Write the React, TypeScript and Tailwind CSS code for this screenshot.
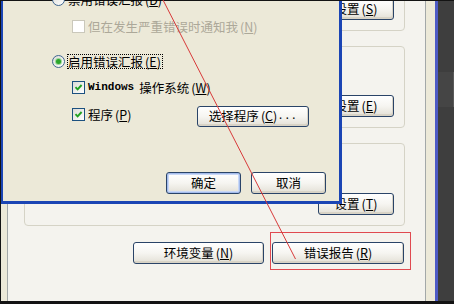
import React from "react";

function Checkbox({ checked = false, disabled = false }: { checked?: boolean; disabled?: boolean }) {
  return (
    <span
      className={
        disabled
          ? "flex h-[13px] w-[13px] shrink-0 items-center justify-center border border-[#CAC8BB] bg-white"
          : "flex h-[13px] w-[13px] shrink-0 items-center justify-center border border-[#1C5180] bg-linear-to-br from-[#DCDCD7] to-white"
      }
    >
      {checked && (
        <svg width="9" height="9" viewBox="0 0 9 9">
          <path d="M1.5 4.2 L3.6 6.4 L7.6 2" fill="none" stroke="#21A121" strokeWidth="1.9" />
        </svg>
      )}
    </span>
  );
}

function Radio({ checked = false }: { checked?: boolean }) {
  return (
    <span className="flex h-[13px] w-[13px] shrink-0 items-center justify-center rounded-full border border-[#3F6690] bg-linear-to-br from-[#DCDCD7] to-white">
      {checked && <span className="h-[5px] w-[5px] rounded-full bg-[#2CA52C] shadow-[0_0_0_1px_#9AD89A]" />}
    </span>
  );
}

function Key({ k }: { k: string }) {
  return (
    <span className="ml-[2px]">
      (<u>{k}</u>)
    </span>
  );
}

function XPButton({
  children,
  className = "",
  isDefault = false,
}: {
  children: React.ReactNode;
  className?: string;
  isDefault?: boolean;
}) {
  return (
    <div
      className={
        "flex shrink-0 items-center justify-center rounded-[3px] border border-[#2A4468] bg-linear-to-b from-white via-[#F6F5F1] to-[#E3E0D6] text-[12.5px] leading-none text-black " +
        (isDefault
          ? "shadow-[inset_0_0_0_1px_#A4BCEC,inset_0_0_0_2px_#C9D8F6] "
          : "shadow-[inset_-1px_-2px_0_#D8D3C6] ") +
        className
      }
    >
      {children}
    </div>
  );
}

export default function App() {
  return (
    <div className="relative h-[304px] w-[454px] overflow-hidden bg-[#131313] font-['Noto_Sans_CJK_SC',sans-serif] text-[12.5px] leading-[13px] text-black">
      {/* desktop row: background window + dark area */}
      <div className="flex h-[301px] pl-[1px] pt-[1px]">
        <div className="flex h-full w-[437px] border-r-[3px] border-[#4E5BC4] bg-[#ECE9D8] pl-[6px] pr-[9px]">
          <div className="flex flex-1 flex-col overflow-hidden border-x border-[#A3A8A8] bg-[#F4F3EE] pl-[16px]">
            <div className="mt-[-29px] flex h-[59px] w-[381px] shrink-0 items-end justify-end rounded-[4px] border border-[#D5D3C6] pb-[10px] pr-[10px]">
              <XPButton className="h-[22px] w-[76px]">
                设置<Key k="S" />
              </XPButton>
            </div>
            <div className="mt-[15px] flex h-[82px] w-[381px] shrink-0 items-end justify-end rounded-[4px] border border-[#D5D3C6] pb-[10px] pr-[10px]">
              <XPButton className="h-[22px] w-[76px]">
                设置<Key k="E" />
              </XPButton>
            </div>
            <div className="mt-[15px] flex h-[83px] w-[381px] shrink-0 items-end justify-end rounded-[4px] border border-[#D5D3C6] pb-[10px] pr-[10px]">
              <XPButton className="h-[22px] w-[76px]">
                设置<Key k="T" />
              </XPButton>
            </div>
            <div className="mt-[16px] flex w-[381px] shrink-0 justify-end gap-[8px] pr-[1px]">
              <XPButton className="h-[22px] w-[131px]">
                环境变量<Key k="N" />
              </XPButton>
              <XPButton className="h-[22px] w-[132px]">
                错误报告<Key k="R" />
              </XPButton>
            </div>
          </div>
        </div>
        <div className="flex flex-1 flex-col bg-[#3E3E3E]">
          <div className="mt-[71px] h-[35px] border-r border-[#5A5A5A] bg-[#454545]" />
        </div>
      </div>

      {/* foreground dialog */}
      <div className="absolute left-[1px] top-[1px] flex h-[203px] w-[341px] flex-col border-b-[3px] border-l-[2px] border-r-[3px] border-[#1B45B4] bg-[#ECE9D8]">
        <div className="mt-[-8px] flex h-[13px] shrink-0 items-center gap-[3px] pl-[49px]">
          <Radio />
          <span>
            禁用错误汇报<Key k="D" />
          </span>
        </div>
        <div className="mt-[14px] flex h-[13px] shrink-0 items-center gap-[3px] pl-[69px]">
          <Checkbox disabled />
          <span className="text-[#ACA899]">
            但在发生严重错误时通知我<Key k="N" />
          </span>
        </div>
        <div className="mt-[22px] flex h-[13px] shrink-0 items-center gap-[2px] pl-[49px]">
          <Radio checked />
          <span className="flex h-[15px] items-center border border-dotted border-black pr-[1px]">
            启用错误汇报<Key k="E" />
          </span>
        </div>
        <div className="mt-[13px] flex h-[13px] shrink-0 items-center gap-[3px] pl-[69px]">
          <Checkbox checked />
          <span className="flex items-center">
            <span className="font-['Liberation_Mono',monospace] text-[11px] font-bold">Windows</span>
            <span className="ml-[5px]">
              操作系统<Key k="W" />
            </span>
          </span>
        </div>
        <div className="mt-[14px] flex h-[13px] shrink-0 items-center pl-[69px]">
          <div className="flex w-[125px] shrink-0 items-center gap-[3px]">
            <Checkbox checked />
            <span>
              程序<Key k="P" />
            </span>
          </div>
          <XPButton className="mt-[3px] h-[21px] w-[112px]">
            选择程序<Key k="C" />
            <span className="font-['Liberation_Mono',monospace] text-[11px]">...</span>
          </XPButton>
        </div>
        <div className="mt-[51px] flex shrink-0 justify-end gap-[10px] pr-[13px]">
          <XPButton isDefault className="h-[22px] w-[75px]">
            确定
          </XPButton>
          <XPButton className="h-[22px] w-[75px]">取消</XPButton>
        </div>
      </div>

      {/* red highlight box */}
      <div className="absolute left-[270px] top-[232px] h-[38px] w-[141px] border border-[#E04A50]" />

      {/* red pointer line */}
      <svg className="pointer-events-none absolute left-0 top-0" width="454" height="304" viewBox="0 0 454 304">
        <line x1="162" y1="-2" x2="295.5" y2="259" stroke="#D83A3A" strokeWidth="1" />
      </svg>
    </div>
  );
}
